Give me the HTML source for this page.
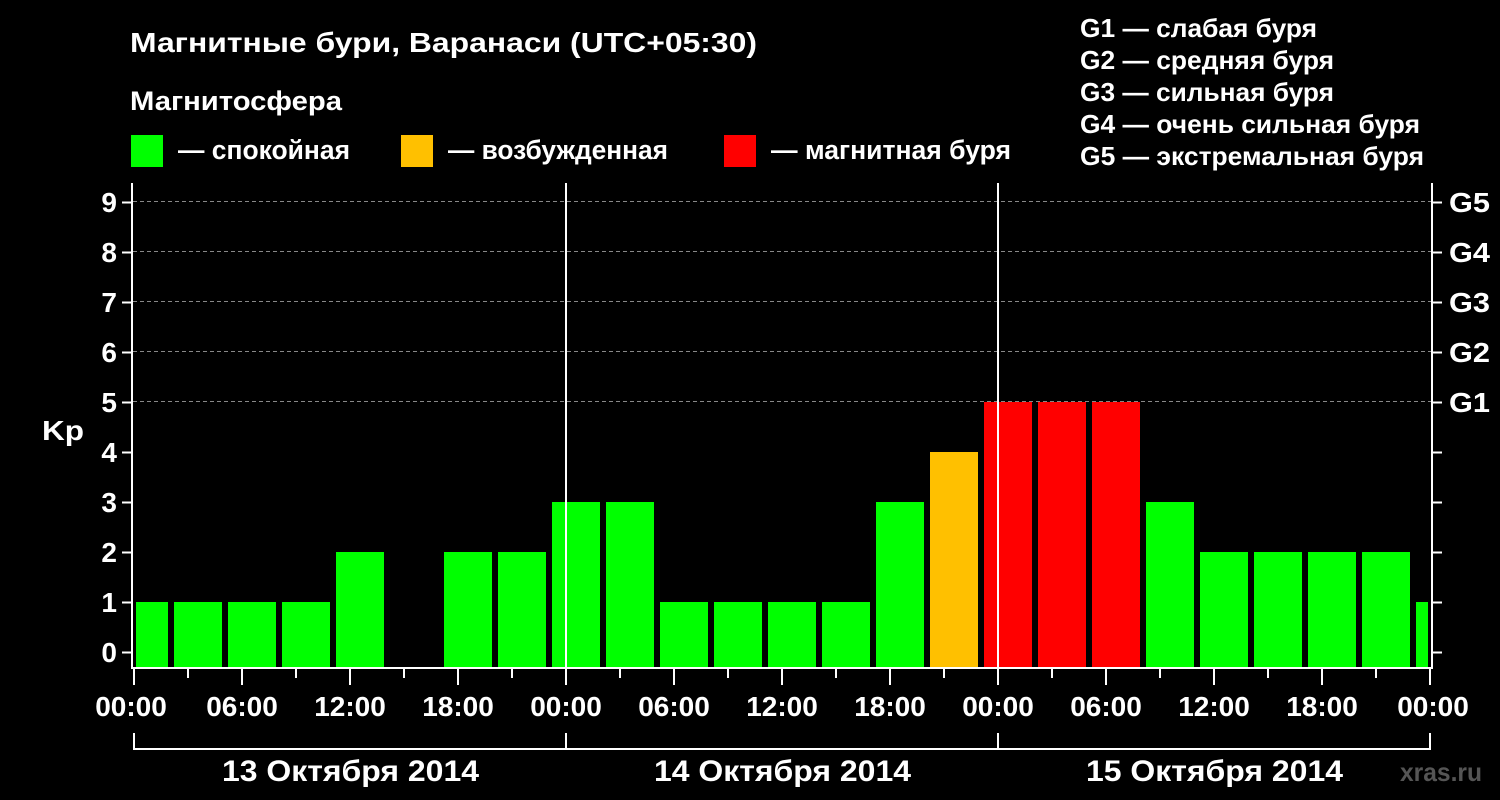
<!DOCTYPE html>
<html><head><meta charset="utf-8"><style>
body{margin:0;background:#000;width:1500px;height:800px;overflow:hidden}
svg{display:block}
text{font-family:"Liberation Sans",sans-serif;font-weight:bold;fill:#fff}
</style></head><body>
<svg width="1500" height="800" viewBox="0 0 1500 800">
<text x="130" y="52" font-size="28" textLength="627" lengthAdjust="spacingAndGlyphs">Магнитные бури, Варанаси (UTC+05:30)</text>
<text x="130" y="110" font-size="27" textLength="212" lengthAdjust="spacingAndGlyphs">Магнитосфера</text>
<rect x="131" y="135" width="32" height="32" fill="#00ff00"/>
<text x="178" y="159" font-size="27" textLength="172" lengthAdjust="spacingAndGlyphs">— спокойная</text>
<rect x="401" y="135" width="32" height="32" fill="#ffc000"/>
<text x="448" y="159" font-size="27" textLength="220" lengthAdjust="spacingAndGlyphs">— возбужденная</text>
<rect x="724" y="135" width="32" height="32" fill="#ff0000"/>
<text x="771" y="159" font-size="27" textLength="240" lengthAdjust="spacingAndGlyphs">— магнитная буря</text>
<g font-size="26">
<text x="1080" y="37" textLength="237" lengthAdjust="spacingAndGlyphs">G1 — слабая буря</text>
<text x="1080" y="69" textLength="254" lengthAdjust="spacingAndGlyphs">G2 — средняя буря</text>
<text x="1080" y="101" textLength="254" lengthAdjust="spacingAndGlyphs">G3 — сильная буря</text>
<text x="1080" y="133" textLength="340" lengthAdjust="spacingAndGlyphs">G4 — очень сильная буря</text>
<text x="1080" y="165" textLength="344" lengthAdjust="spacingAndGlyphs">G5 — экстремальная буря</text>
</g>
<g stroke="#888" stroke-dasharray="4,3" stroke-width="1">
<line x1="133" y1="201.5" x2="1432" y2="201.5"/><line x1="133" y1="251.5" x2="1432" y2="251.5"/>
<line x1="133" y1="301.5" x2="1432" y2="301.5"/><line x1="133" y1="351.5" x2="1432" y2="351.5"/>
<line x1="133" y1="401.5" x2="1432" y2="401.5"/>
</g>
<g id="bars"></g>
<g stroke="#fff" stroke-width="2" fill="none">
<line x1="132" y1="183" x2="132" y2="669"/><line x1="1432" y1="183" x2="1432" y2="669"/>
<line x1="131" y1="668" x2="1433" y2="668"/>
<line x1="566" y1="183" x2="566" y2="668"/><line x1="998" y1="183" x2="998" y2="668"/>
<path d="M134 733V749H1430V733M566 733V749M998 733V749"/>
</g>
<g font-size="28" text-anchor="end">
<text x="117" y="662">0</text><text x="117" y="612">1</text><text x="117" y="562">2</text><text x="117" y="512">3</text><text x="117" y="462">4</text><text x="117" y="412">5</text><text x="117" y="362">6</text><text x="117" y="312">7</text><text x="117" y="262">8</text><text x="117" y="212">9</text>
</g>
<g font-size="28"><text x="1449" y="412" textLength="41" lengthAdjust="spacingAndGlyphs">G1</text><text x="1449" y="362" textLength="41" lengthAdjust="spacingAndGlyphs">G2</text><text x="1449" y="312" textLength="41" lengthAdjust="spacingAndGlyphs">G3</text><text x="1449" y="262" textLength="41" lengthAdjust="spacingAndGlyphs">G4</text><text x="1449" y="212" textLength="41" lengthAdjust="spacingAndGlyphs">G5</text></g>
<text x="42" y="440" font-size="28" textLength="42" lengthAdjust="spacingAndGlyphs">Kp</text>
<g font-size="28" text-anchor="middle">
<text x="131" y="716">00:00</text><text x="242" y="716">06:00</text><text x="350" y="716">12:00</text><text x="458" y="716">18:00</text>
<text x="566" y="716">00:00</text><text x="674" y="716">06:00</text><text x="782" y="716">12:00</text><text x="890" y="716">18:00</text>
<text x="998" y="716">00:00</text><text x="1106" y="716">06:00</text><text x="1214" y="716">12:00</text><text x="1322" y="716">18:00</text><text x="1433" y="716">00:00</text>
</g>
<g font-size="30">
<text x="222" y="781" textLength="257" lengthAdjust="spacingAndGlyphs">13 Октября 2014</text>
<text x="654" y="781" textLength="257" lengthAdjust="spacingAndGlyphs">14 Октября 2014</text>
<text x="1086" y="781" textLength="257" lengthAdjust="spacingAndGlyphs">15 Октября 2014</text>
</g>
<text x="1400" y="781" font-size="26" textLength="82" lengthAdjust="spacingAndGlyphs" style="fill:#555">xras.ru</text>
<g stroke="#fff" stroke-width="2" id="ticks"></g>
</svg>
<script>
var ns="http://www.w3.org/2000/svg",b=document.getElementById("bars"),t=document.getElementById("ticks");
function el(p,n,a){var e=document.createElementNS(ns,n);for(var k in a)e.setAttribute(k,a[k]);p.appendChild(e);}
var v=[1,1,1,2,0,2,2,3,3,1,1,1,1,3,4,5,5,5,3,2,2,2,2];
el(b,"rect",{x:136,y:602,width:32,height:66,fill:"#00ff00"});
v.forEach(function(k,i){if(!k)return;var c=k>=5?"#ff0000":k==4?"#ffc000":"#00ff00";
el(b,"rect",{x:174+54*i,y:652-50*k,width:48,height:16+50*k,fill:c});});
el(b,"rect",{x:1416,y:602,width:12,height:66,fill:"#00ff00"});
for(var k=0;k<10;k++){var y=652-50*k+0.5;el(t,"line",{x1:122,y1:y,x2:131,y2:y});el(t,"line",{x1:1433,y1:y,x2:1442,y2:y});}
for(var i=0;i<=24;i++){var x=134+54*i;if(i==24)x=1430;el(t,"line",{x1:x,y1:669,x2:x,y2:i%2?678:685});}
</script>
</body></html>
